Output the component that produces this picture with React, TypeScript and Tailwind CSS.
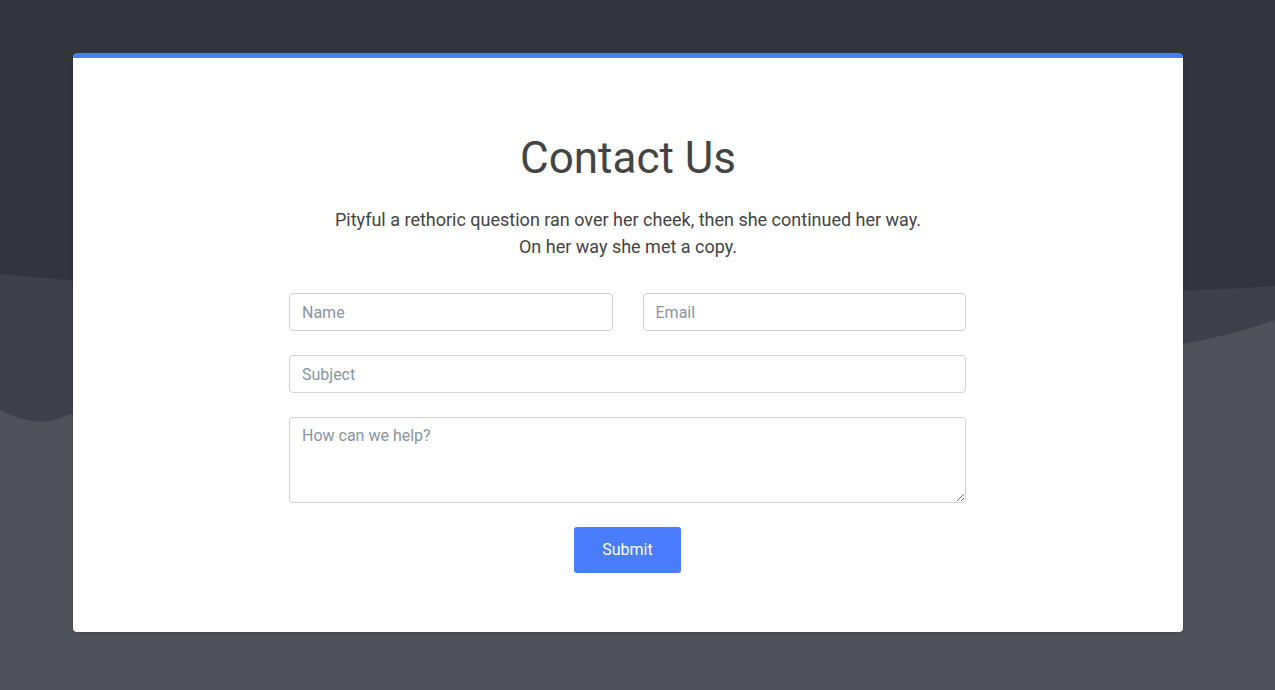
export default function App() {
  return (
    <div className="relative min-h-[690px] w-full overflow-hidden bg-[#32343f] font-['Roboto',sans-serif]">
      {/* background waves */}
      <svg
        className="absolute inset-0 h-full w-full"
        viewBox="0 0 1275 690"
        preserveAspectRatio="none"
      >
        <path d="M0,274 C250,300 900,310 1275,286 L1275,690 L0,690 Z" fill="#3e404b" />
        <path d="M0,410 C20,420 40,426 60,418 C300,330 1000,420 1275,320 L1275,690 L0,690 Z" fill="#4f515b" />
      </svg>

      <div className="relative px-[73px] pt-[53px] pb-[58px]">
        <div className="w-[1110px] overflow-hidden rounded-[4px] border-t-[5px] border-[#4a7cfe] bg-white shadow-sm">
          <div className="flex flex-col items-center pt-[73px] pb-[59px]">
            <h1 className="text-[44px] leading-[54px] font-normal text-[#444444]">Contact Us</h1>
            <p className="mt-[21px] text-center text-[18px] leading-[27px] text-[#444444]">
              Pityful a rethoric question ran over her cheek, then she continued her way.
              <br />
              On her way she met a copy.
            </p>

            <form className="mt-[33px] mr-[1px] flex w-[677px] flex-col gap-[24px]">
              <div className="grid grid-cols-2 gap-[30px]">
                <input
                  type="text"
                  placeholder="Name"
                  className="h-[38px] rounded-[4px] border border-[#cfd3d8] px-[12px] text-[16px] text-[#444] outline-none placeholder:text-[#8a94a3]"
                />
                <input
                  type="email"
                  placeholder="Email"
                  className="h-[38px] rounded-[4px] border border-[#cfd3d8] px-[12px] text-[16px] text-[#444] outline-none placeholder:text-[#8a94a3]"
                />
              </div>
              <input
                type="text"
                placeholder="Subject"
                className="h-[38px] rounded-[4px] border border-[#cfd3d8] px-[12px] text-[16px] text-[#444] outline-none placeholder:text-[#8a94a3]"
              />
              <textarea
                placeholder="How can we help?"
                className="h-[86px] rounded-[4px] border border-[#cfd3d8] px-[12px] py-[8px] text-[16px] leading-[20px] text-[#444] outline-none placeholder:text-[#8a94a3]"
              />
              <div className="flex justify-center">
                <button
                  type="button"
                  className="h-[46px] w-[107px] rounded-[3px] bg-[#4a7cfe] text-[16px] text-white"
                >
                  Submit
                </button>
              </div>
            </form>
          </div>
        </div>
      </div>
    </div>
  );
}
